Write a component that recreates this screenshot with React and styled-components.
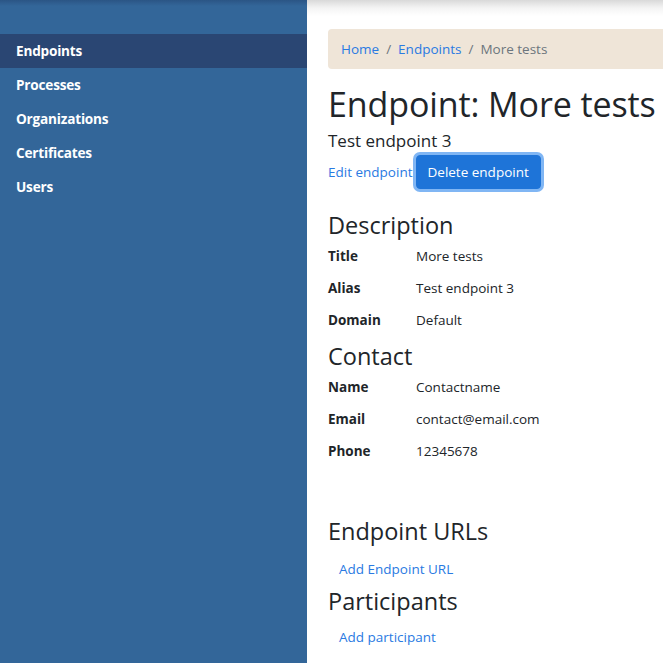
import React from 'react';
import styled, { createGlobalStyle } from 'styled-components';

const GlobalStyle = createGlobalStyle`
  html, body {
    margin: 0;
    padding: 0;
    background: #fff;
    overflow: hidden;
  }
  body {
    font-family: 'Open Sans', 'Liberation Sans', sans-serif;
    color: #212529;
    font-size: 13.5px;
  }
`;

const navItems = ['Endpoints', 'Processes', 'Organizations', 'Certificates', 'Users'];

const description = [
  { label: 'Title', value: 'More tests' },
  { label: 'Alias', value: 'Test endpoint 3' },
  { label: 'Domain', value: 'Default' },
];

const contact = [
  { label: 'Name', value: 'Contactname' },
  { label: 'Email', value: 'contact@email.com' },
  { label: 'Phone', value: '12345678' },
];

const App = () => {
  return (
    <Layout>
      <GlobalStyle />
      <Sidebar>
        <NavList>
          {navItems.map((item) => (
            <NavItem key={item} $active={item === 'Endpoints'}>
              {item}
            </NavItem>
          ))}
        </NavList>
      </Sidebar>
      <Main>
        <Breadcrumb>
          <Crumb href='#'>Home</Crumb>
          <Sep>/</Sep>
          <Crumb href='#'>Endpoints</Crumb>
          <Sep>/</Sep>
          <Current>More tests</Current>
        </Breadcrumb>
        <Title>Endpoint: More tests</Title>
        <Subtitle>Test endpoint 3</Subtitle>
        <Actions>
          <TextLink href='#'>Edit endpoint</TextLink>
          <DeleteButton type='button'>Delete endpoint</DeleteButton>
        </Actions>

        <SectionTitle $gap={22}>Description</SectionTitle>
        <Details $offset={1}>
          {description.map((d) => (
            <React.Fragment key={d.label}>
              <dt>{d.label}</dt>
              <dd>{d.value}</dd>
            </React.Fragment>
          ))}
        </Details>

        <SectionTitle $gap={6}>Contact</SectionTitle>
        <Details $offset={1}>
          {contact.map((d) => (
            <React.Fragment key={d.label}>
              <dt>{d.label}</dt>
              <dd>{d.value}</dd>
            </React.Fragment>
          ))}
        </Details>

        <SectionTitle $gap={50}>Endpoint URLs</SectionTitle>
        <AddLink href='#' $gap={15}>Add Endpoint URL</AddLink>
        <SectionTitle $gap={9}>Participants</SectionTitle>
        <AddLink href='#' $gap={12}>Add participant</AddLink>
      </Main>
    </Layout>
  );
};

const Layout = styled.div`
  display: flex;
  width: 663px;
  height: 663px;
  overflow: hidden;
`;

const Sidebar = styled.aside`
  flex: 0 0 307px;
  background: linear-gradient(to bottom, #2b5585 0, #336699 6px) #336699;
  padding-top: 34px;
`;

const NavList = styled.ul`
  list-style: none;
  margin: 0;
  padding: 0;
`;

const NavItem = styled.li`
  height: 34px;
  display: flex;
  align-items: center;
  padding-left: 16px;
  padding-bottom: 1px;
  box-sizing: border-box;
  color: #fff;
  font-weight: 700;
  font-size: 13.6px;
  letter-spacing: -0.2px;
  background: ${(p) => (p.$active ? '#2a4673' : 'transparent')};
`;

const Main = styled.main`
  flex: 1;
  min-width: 0;
  padding: 29px 0 0 21px;
  background: linear-gradient(to bottom, #d9d9d9 0, #f4f4f4 8px, #fff 16px) no-repeat;
  background-size: 100% 16px;
`;

const Breadcrumb = styled.nav`
  display: flex;
  align-items: center;
  height: 40px;
  padding: 0 13px;
  background: #efe5d8;
  border-radius: 4px 0 0 4px;
  font-size: 13.5px;
  white-space: nowrap;
`;

const Crumb = styled.a`
  color: #2a7ae2;
  text-decoration: none;
`;

const Sep = styled.span`
  color: #6c757d;
  padding: 0 7px;
`;

const Current = styled.span`
  color: #6c757d;
`;

const Title = styled.h1`
  margin: 15px 0 0;
  font-size: 34px;
  font-weight: 400;
  line-height: 1.2;
  letter-spacing: -0.1px;
  white-space: nowrap;
`;

const Subtitle = styled.div`
  margin-top: 5px;
  font-size: 17px;
  line-height: 1.3;
`;

const Actions = styled.div`
  display: flex;
  align-items: center;
  margin-top: 3px;
`;

const TextLink = styled.a`
  color: #2a7ae2;
  text-decoration: none;
  font-size: 13.5px;
`;

const DeleteButton = styled.button`
  margin-left: 3px;
  height: 34px;
  padding: 0 11px;
  font-family: inherit;
  font-size: 13.5px;
  color: #fff;
  background: #1e74d8;
  border: 1px solid #1e74d8;
  border-radius: 4px;
  box-shadow: 0 0 0 3px #80b6f4;
  cursor: pointer;
`;

const SectionTitle = styled.h2`
  margin: ${(p) => p.$gap}px 0 0;
  font-size: 23.5px;
  font-weight: 400;
  line-height: 1.2;
`;

const Details = styled.dl`
  display: grid;
  grid-template-columns: 88px 1fr;
  grid-auto-rows: 32px;
  align-items: center;
  margin: ${(p) => p.$offset || 0}px 0 0;
  font-size: 13.5px;

  dt {
    font-weight: 700;
  }
  dd {
    margin: 0;
  }
`;

const AddLink = styled.a`
  display: block;
  margin: ${(p) => p.$gap}px 0 0 11px;
  color: #2a7ae2;
  text-decoration: none;
  font-size: 13.5px;
`;

export default App;
